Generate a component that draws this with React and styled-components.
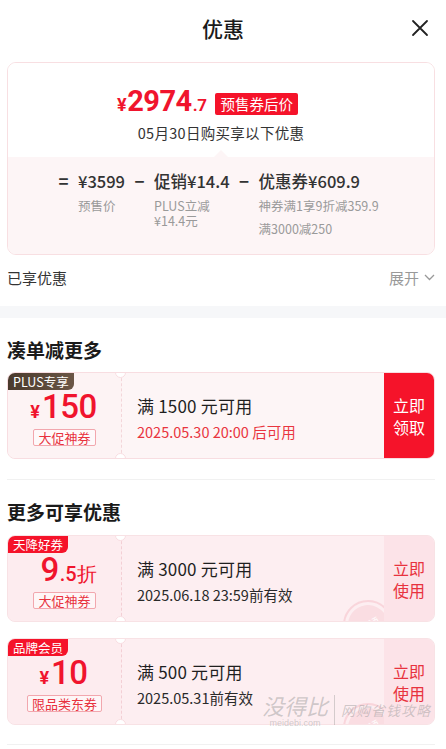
import React from 'react';
import styled, { createGlobalStyle } from 'styled-components';

const GlobalStyle = createGlobalStyle`
  html, body {
    margin: 0;
    padding: 0;
    background: #fff;
  }
  body {
    font-family: "Noto Sans CJK SC", "Noto Sans", Roboto, sans-serif;
    color: #222;
  }
  * { box-sizing: border-box; }
`

const Page = styled.div`
  width: 446px;
  height: 749px;
  overflow: hidden;
  position: relative;
  background: #fff;
`

const Header = styled.div`
  height: 56px;
  display: flex;
  align-items: center;
  justify-content: center;
  position: relative;
`

const HeaderTitle = styled.div`
  font-size: 21px;
  font-weight: 500;
  color: #1a1a1a;
`

const Close = styled.div`
  position: absolute;
  right: 17px;
  top: 19px;
  width: 18px;
  height: 18px;
  display: flex;
`

const Section = styled.div`
  padding: 0 11px 0 7px;
`

const PriceCard = styled.div`
  margin-top: 6px;
  border: 1px solid #f8dfe2;
  border-radius: 9px;
  overflow: hidden;
`

const PriceTop = styled.div`
  padding: 20px 0 14px;
  display: flex;
  flex-direction: column;
  align-items: center;
  background: #fff;
`

const PriceLine = styled.div`
  display: flex;
  align-items: center;
  gap: 8px;
  margin-right: 28px;
`

const BigPrice = styled.div`
  display: flex;
  align-items: baseline;
  color: #f0142d;
  font-family: Roboto, "Noto Sans", sans-serif;
  font-weight: 700;
  font-size: 29px;
  line-height: 36px;
  letter-spacing: -0.5px;
`

const Small = styled.span`
  font-size: ${(p) => p.size}px;
  font-weight: 700;
  margin: 0 1px;
`

const RedTag = styled.span`
  background: #f5132a;
  color: #fff;
  font-size: 14.5px;
  line-height: 22px;
  padding: 0 5px;
  border-radius: 2px;
  margin-top: 2px;
`

const Subtitle = styled.div`
  font-size: 14.5px;
  line-height: 20px;
  color: #333;
  letter-spacing: 0.3px;
`

const PriceBottom = styled.div`
  position: relative;
  background: #fdf5f6;
  padding: 11px 0 18px 50px;
  display: flex;
  align-items: flex-start;
  gap: 9px;

  &::before {
    content: "";
    position: absolute;
    left: 206px;
    top: -7px;
    width: 0;
    height: 0;
    border-left: 7px solid transparent;
    border-right: 7px solid transparent;
    border-bottom: 7px solid #fdf5f6;
  }
`

const Op = styled.div`
  width: 11px;
  font-size: 17px;
  font-weight: 700;
  color: #333;
  line-height: 26px;
  text-align: center;
`

const Part = styled.div`
  display: flex;
  flex-direction: column;
`

const PartValue = styled.div`
  font-size: 16.5px;
  font-weight: 500;
  color: #333;
  line-height: 26px;
  white-space: nowrap;
`

const PartLabel = styled.div`
  font-size: 12.5px;
  color: #9a9a9a;
  line-height: 15px;
  margin-top: ${(p) => p.gap || 0}px;
  white-space: nowrap;
`

const EnjoyRow = styled.div`
  height: 44px;
  display: flex;
  align-items: center;
  justify-content: space-between;
`

const EnjoyLabel = styled.div`
  font-size: 15px;
  color: #333;
`

const Expand = styled.div`
  display: flex;
  align-items: center;
  gap: 5px;
  font-size: 15px;
  color: #999;
`

const Band = styled.div`
  height: 12px;
  background: #f6f7f9;
  margin-top: 7px;
`

const SectionTitle = styled.div`
  font-size: 19px;
  font-weight: 700;
  color: #1a1a1a;
  line-height: 26px;
  padding: ${(p) => p.pad};
`

const Coupon = styled.div`
  position: relative;
  height: 87px;
  display: flex;
  border: 1px solid ${(p) => (p.hot ? '#f8dde1' : '#f8e2e5')};
  border-radius: 8px;
  overflow: hidden;
  background: ${(p) => (p.hot ? '#fdf5f6' : '#fdeef1')};
  margin-bottom: ${(p) => p.mb || 0}px;
`

const Stub = styled.div`
  position: relative;
  width: 114px;
  display: flex;
  flex-direction: column;
  align-items: center;
  padding-top: 15px;
  border-right: 1px dashed ${(p) => (p.hot ? '#f3d6da' : '#f3cfd5')};
  background: ${(p) => (p.hot ? '#fdf3f4' : '#fdecef')};

  &::before, &::after {
    content: "";
    position: absolute;
    right: -5px;
    width: 9px;
    height: 9px;
    border-radius: 50%;
    background: #fff;
    border: 1px solid #f8dde1;
  }
  &::before { top: -6px; }
  &::after { bottom: -6px; }
`

const StubTag = styled.div`
  position: absolute;
  left: 0;
  top: 0;
  height: 17px;
  padding: 0 5px;
  font-size: 12.5px;
  line-height: 17px;
  color: #fff;
  border-bottom-right-radius: 6px;
  background: ${(p) => (p.dark ? 'linear-gradient(90deg, #4a3a2c, #6b5646)' : '#f5132a')};
`

const Amount = styled.div`
  display: flex;
  align-items: baseline;
  color: #f0142d;
  font-family: Roboto, "Noto Sans", sans-serif;
  font-weight: 500;
  height: 38px;
  line-height: 38px;
  margin-left: ${(p) => p.shift || 0}px;
`

const Yen = styled.span`
  font-size: 18px;
  font-weight: 700;
  margin-right: 2px;
`

const Digits = styled.span`
  font-size: 33px;
  letter-spacing: -0.5px;
`

const Fraction = styled.span`
  font-size: 20px;
  margin-left: 1px;
`

const OutlineTag = styled.div`
  margin-top: 3px;
  height: 17px;
  padding: 0 4px;
  border: 1px solid #f2a7ae;
  border-radius: 2px;
  font-size: 13px;
  line-height: 15px;
  color: #e8323e;
  background: rgba(255, 255, 255, 0.5);
`

const Main = styled.div`
  flex: 1;
  position: relative;
  padding: 21px 0 0 15px;
  overflow: hidden;
`

const Cond = styled.div`
  font-size: 17px;
  color: #1f1f1f;
  line-height: 24px;
  letter-spacing: 0.2px;
`

const DateText = styled.div`
  margin-top: 3px;
  font-size: 14.5px;
  line-height: 22px;
  color: ${(p) => (p.red ? '#e9353f' : '#2a2a2a')};
`

const Stamp = styled.div`
  position: absolute;
  right: -9px;
  top: ${(p) => p.top}px;
  width: 50px;
  height: 50px;
  border-radius: 50%;
  border: 2px solid rgba(246, 196, 205, 0.6);
  display: flex;
  align-items: center;
  justify-content: center;

  span {
    width: 40px;
    height: 40px;
    border-radius: 50%;
    background: rgba(247, 200, 209, 0.45);
    color: rgba(255, 255, 255, 0.9);
    font-size: 12px;
    display: flex;
    align-items: center;
    justify-content: center;
    transform: rotate(-30deg);
  }
`

const Action = styled.div`
  width: 50px;
  display: flex;
  align-items: center;
  justify-content: center;
  text-align: center;
  font-size: 16px;
  line-height: 22px;
  color: ${(p) => (p.solid ? '#fff' : '#e8323e')};
  background: ${(p) => (p.solid ? '#f5132a' : '#fce3e8')};
`

const Divider = styled.div`
  height: 1px;
  background: #f1f1f1;
  margin: ${(p) => p.m};
`

const Watermark = styled.div`
  position: absolute;
  left: 262px;
  top: 692px;
  display: flex;
  align-items: center;
  gap: 6px;
  color: rgba(150, 150, 150, 0.45);
  pointer-events: none;
`

const WmBrand = styled.div`
  display: flex;
  flex-direction: column;
  align-items: center;
  font-size: 22px;
  line-height: 26px;
  font-style: italic;

  small {
    font-size: 9px;
    line-height: 10px;
    font-style: normal;
    font-family: "Liberation Sans", sans-serif;
  }
`

const WmBar = styled.div`
  width: 1px;
  height: 30px;
  background: rgba(150, 150, 150, 0.4);
`

const WmSlogan = styled.div`
  font-size: 14px;
  font-style: italic;
  letter-spacing: 1px;
`

function CouponCard({ tag, dark, hot, amount, label, cond, date, action, mb, stamp }) {
  return (
    <Coupon hot={hot} mb={mb}>
      <Stub hot={hot}>
        <StubTag dark={dark}>{tag}</StubTag>
        {amount}
        <OutlineTag>{label}</OutlineTag>
      </Stub>
      <Main>
        <Cond>{cond}</Cond>
        <DateText red={hot}>{date}</DateText>
        {stamp && <Stamp top={stamp}><span>已领</span></Stamp>}
      </Main>
      <Action solid={hot}>{action[0]}<br />{action[1]}</Action>
    </Coupon>
  );
}

export default function App() {
  return (
    <Page>
      <GlobalStyle />
      <Header>
        <HeaderTitle>优惠</HeaderTitle>
        <Close>
          <svg width="18" height="18" viewBox="0 0 18 18">
            <path d="M2 2 L16 16 M16 2 L2 16" stroke="#222" strokeWidth="1.8" strokeLinecap="round" />
          </svg>
        </Close>
      </Header>

      <Section>
        <PriceCard>
          <PriceTop>
            <PriceLine>
              <BigPrice>
                <Small size={18}>¥</Small>2974<Small size={17}>.7</Small>
              </BigPrice>
              <RedTag>预售券后价</RedTag>
            </PriceLine>
            <Subtitle>05月30日购买享以下优惠</Subtitle>
          </PriceTop>
          <PriceBottom>
            <Op>=</Op>
            <Part>
              <PartValue>¥3599</PartValue>
              <PartLabel gap={4}>预售价</PartLabel>
            </Part>
            <Op>−</Op>
            <Part>
              <PartValue>促销¥14.4</PartValue>
              <PartLabel gap={4}>PLUS立减<br />¥14.4元</PartLabel>
            </Part>
            <Op>−</Op>
            <Part>
              <PartValue>优惠券¥609.9</PartValue>
              <PartLabel gap={4}>神券满1享9折减359.9</PartLabel>
              <PartLabel gap={8}>满3000减250</PartLabel>
            </Part>
          </PriceBottom>
        </PriceCard>

        <EnjoyRow>
          <EnjoyLabel>已享优惠</EnjoyLabel>
          <Expand>
            展开
            <svg width="11" height="7" viewBox="0 0 11 7">
              <path d="M1 1 L5.5 5.5 L10 1" fill="none" stroke="#999" strokeWidth="1.3" />
            </svg>
          </Expand>
        </EnjoyRow>
      </Section>

      <Band />

      <Section>
        <SectionTitle pad="19px 0 9px">凑单减更多</SectionTitle>
        <CouponCard
          tag="PLUS专享"
          dark
          hot
          amount={<Amount shift={-2}><Yen>¥</Yen><Digits>150</Digits></Amount>}
          label="大促神券"
          cond="满 1500 元可用"
          date="2025.05.30 20:00 后可用"
          action={['立即', '领取']}
        />
        <Divider m="20px 0 19px" />
        <SectionTitle pad="0 0 10px">更多可享优惠</SectionTitle>
        <CouponCard
          tag="天降好券"
          amount={<Amount shift={8}><Digits>9</Digits><Fraction>.5折</Fraction></Amount>}
          label="大促神券"
          cond="满 3000 元可用"
          date="2025.06.18 23:59前有效"
          action={['立即', '使用']}
          mb={16}
          stamp={64}
        />
        <CouponCard
          tag="品牌会员"
          amount={<Amount shift={-2}><Yen>¥</Yen><Digits>10</Digits></Amount>}
          label="限品类东券"
          cond="满 500 元可用"
          date="2025.05.31前有效"
          action={['立即', '使用']}
          stamp={64}
        />
        <Divider m="19px 0 0" />
      </Section>

      <Watermark>
        <WmBrand>没得比<small>meidebi.com</small></WmBrand>
        <WmBar />
        <WmSlogan>网购省钱攻略</WmSlogan>
      </Watermark>
    </Page>
  );
}
